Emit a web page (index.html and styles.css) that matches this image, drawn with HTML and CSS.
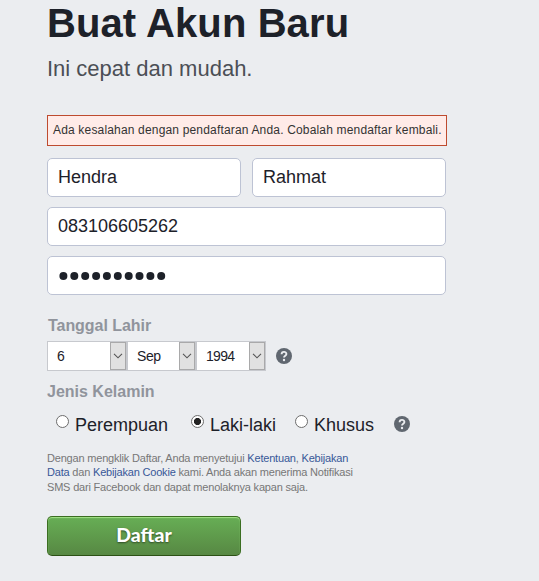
FILE: index.html
```html
<!DOCTYPE html>
<html lang="id">
<head>
<meta charset="utf-8">
<title>Buat Akun Baru</title>
<link rel="stylesheet" href="styles.css">
</head>
<body>
<main class="signup">
  <h1 class="title">Buat Akun Baru</h1>
  <p class="subtitle">Ini cepat dan mudah.</p>
  <div class="error"><span>Ada kesalahan dengan pendaftaran Anda. Cobalah mendaftar kembali.</span></div>
  <div class="names">
    <div class="field">Hendra</div>
    <div class="field">Rahmat</div>
  </div>
  <div class="field">083106605262</div>
  <div class="field password">
    <svg width="110" height="10" viewBox="0 0 110 10"><g fill="#1d2129"><circle cx="5.4" cy="5" r="4"/><circle cx="16.3" cy="5" r="4"/><circle cx="27.2" cy="5" r="4"/><circle cx="38.1" cy="5" r="4"/><circle cx="48.9" cy="5" r="4"/><circle cx="59.8" cy="5" r="4"/><circle cx="70.7" cy="5" r="4"/><circle cx="81.5" cy="5" r="4"/><circle cx="92.4" cy="5" r="4"/><circle cx="103.2" cy="5" r="4"/></g></svg>
  </div>
  <h2 class="label birth">Tanggal Lahir</h2>
  <div class="dates">
    <div class="select day"><span>6</span><i><svg width="10" height="6" viewBox="0 0 10 6"><path d="M1 .8l4 4 4-4"/></svg></i></div>
    <div class="select month"><span>Sep</span><i><svg width="10" height="6" viewBox="0 0 10 6"><path d="M1 .8l4 4 4-4"/></svg></i></div>
    <div class="select year"><span>1994</span><i><svg width="10" height="6" viewBox="0 0 10 6"><path d="M1 .8l4 4 4-4"/></svg></i></div>
    <svg class="help" width="16" height="16" viewBox="0 0 16 16"><circle cx="8" cy="8" r="8" fill="#606770"/><path d="M5.6 6.2C5.6 3.1 10.4 3.1 10.4 6C10.4 7.7 8 7.7 8 9.6" fill="none" stroke="#ebedf0" stroke-width="1.9"/><circle cx="8" cy="12" r="1.2" fill="#ebedf0"/></svg>
  </div>
  <h2 class="label gender">Jenis Kelamin</h2>
  <div class="options">
    <label class="option woman"><i class="radio"></i><span>Perempuan</span></label>
    <label class="option man"><i class="radio on"></i><span>Laki-laki</span></label>
    <label class="option custom"><i class="radio"></i><span>Khusus</span></label>
    <svg class="help" width="16" height="16" viewBox="0 0 16 16"><circle cx="8" cy="8" r="8" fill="#606770"/><path d="M5.6 6.2C5.6 3.1 10.4 3.1 10.4 6C10.4 7.7 8 7.7 8 9.6" fill="none" stroke="#ebedf0" stroke-width="1.9"/><circle cx="8" cy="12" r="1.2" fill="#ebedf0"/></svg>
  </div>
  <p class="legal">Dengan mengklik Daftar, Anda menyetujui <a>Ketentuan</a>, <a>Kebijakan</a><br><a>Data</a> dan <a>Kebijakan Cookie</a> kami. Anda akan menerima Notifikasi<br>SMS dari Facebook dan dapat menolaknya kapan saja.</p>
  <button class="submit">Daftar</button>
</main>
</body>
</html>
```
FILE: styles.css
```css
* { box-sizing: border-box; }
body {
  margin: 0;
  background: #ebedf0;
  color: #1d2129;
  font-family: "Liberation Sans", Arial, sans-serif;
  overflow: hidden;
}
.signup { width: 400px; margin-left: 47px; white-space: nowrap; }
.title { margin: 0; font-size: 40px; line-height: 46px; letter-spacing: 0.1px; }
.subtitle {
  margin: 10px 0 0;
  font-size: 22px;
  line-height: 26px;
  color: #4b4f56;
}
.error {
  height: 31px;
  margin-top: 33px;
  padding-left: 5px;
  border: 1px solid #be4b2f;
  background: #ffebe8;
  color: #333;
  font-size: 12px;
  line-height: 28px;
  letter-spacing: 0.17px;
}
.names { display: flex; gap: 11px; width: 399px; margin-top: 12px; }
.names .field { width: 194px; margin: 0; }
.field {
  width: 399px;
  height: 39px;
  margin-top: 10px;
  padding-left: 10px;
  border: 1px solid #bdc3d4;
  border-radius: 5px;
  background: #fff;
  font-size: 18px;
  line-height: 37px;
}
.password { display: flex; align-items: center; }
.label {
  margin: 0;
  color: #90949c;
  font-size: 16px;
  line-height: 20px;
}
.birth { margin-top: 21px; padding-left: 1px; letter-spacing: -0.05px; }
.dates { display: flex; align-items: center; height: 30px; margin-top: 5px; }
.select {
  display: flex;
  justify-content: space-between;
  height: 30px;
  border: 1px solid #c7c9ce;
  background: #fff;
  font-size: 14px;
  line-height: 29px;
  letter-spacing: -0.7px;
}
.select span { padding-left: 9px; }
.select i {
  display: flex;
  align-items: center;
  justify-content: center;
  width: 16px;
  height: 28px;
  border: 1px solid #a9a9aa;
  background: #e1e1e1;
}
.select path { fill: none; stroke: #555; stroke-width: 1.1; }
.day { width: 80px; }
.month { width: 69px; }
.month span { letter-spacing: -0.4px; }
.year { width: 70px; }
.dates .help { margin-left: 10px; }
.gender { margin-top: 11px; }
.options { display: flex; height: 27px; margin-top: 9px; font-size: 18px; line-height: 29px; }
.option { display: flex; }
.woman { width: 144px; padding-left: 9px; }
.man { width: 104px; }
.custom { width: 99px; }
.options .help { margin-top: 5px; }
.radio {
  width: 13px;
  height: 13px;
  margin: 4px 6px 0 0;
  border: 1px solid #6d6d6d;
  border-radius: 50%;
  background: #fff;
}
.on { background: radial-gradient(circle, #222 0 3.2px, #fff 3.9px); }
.legal {
  margin: 13px 0 0;
  color: #777;
  font-size: 11px;
  line-height: 14.4px;
  letter-spacing: -0.19px;
}
.legal a { color: #385898; }
.submit {
  display: block;
  width: 194px;
  height: 40px;
  margin: 21.3px 0 0;
  padding: 0 0 2px;
  border: 1px solid #3b6e22;
  border-bottom-color: #2c5115;
  border-radius: 5px;
  background: linear-gradient(#67ae55, #578843);
  box-shadow: inset 0 1px 1px #a4e388;
  color: #fff;
  font: 900 19.4px Lato, sans-serif;
  text-shadow: 0 1px 2px rgba(0, 0, 0, .5);
}
```
